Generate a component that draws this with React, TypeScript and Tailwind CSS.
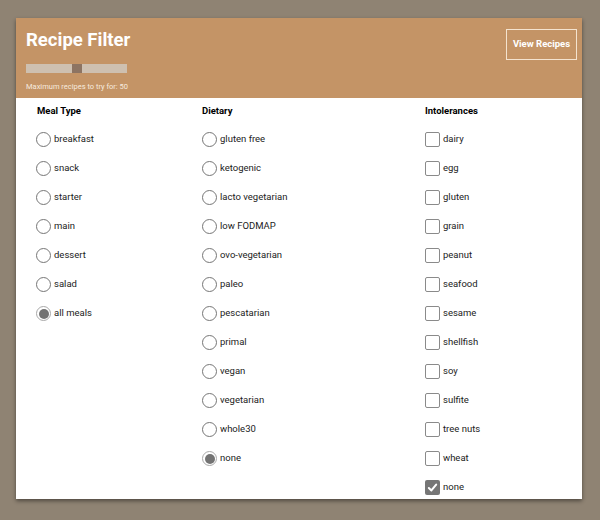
import React from "react";

const mealTypes = ["breakfast", "snack", "starter", "main", "dessert", "salad", "all meals"];
const diets = [
  "gluten free",
  "ketogenic",
  "lacto vegetarian",
  "low FODMAP",
  "ovo-vegetarian",
  "paleo",
  "pescatarian",
  "primal",
  "vegan",
  "vegetarian",
  "whole30",
  "none",
];
const intolerances = [
  "dairy",
  "egg",
  "gluten",
  "grain",
  "peanut",
  "seafood",
  "sesame",
  "shellfish",
  "soy",
  "sulfite",
  "tree nuts",
  "wheat",
  "none",
];

function Radio({ label, checked }: { label: string; checked?: boolean }) {
  return (
    <div className="flex items-center h-[29px]">
      <span
        className={`w-[15px] h-[15px] rounded-full border flex items-center justify-center bg-white ${
          checked ? "border-[#a9a9a9]" : "border-[#767676]"
        }`}
      >
        {checked && <span className="w-[10px] h-[10px] rounded-full bg-[#737373]"></span>}
      </span>
      <span className="ml-[3px] text-[9.5px] text-[#222]">{label}</span>
    </div>
  );
}

function Checkbox({ label, checked }: { label: string; checked?: boolean }) {
  return (
    <div className="flex items-center h-[29px]">
      {checked ? (
        <span className="w-[15px] h-[15px] rounded-[2px] bg-[#767676] flex items-center justify-center">
          <svg width="11" height="11" viewBox="0 0 12 12">
            <path d="M2 6.5 L4.8 9.2 L10 2.8" fill="none" stroke="white" strokeWidth="2.2" strokeLinecap="round" strokeLinejoin="round" />
          </svg>
        </span>
      ) : (
        <span className="w-[15px] h-[15px] rounded-[2px] border border-[#8a8a8a] bg-white"></span>
      )}
      <span className="ml-[3px] text-[9.5px] text-[#222]">{label}</span>
    </div>
  );
}

export default function App() {
  return (
    <div
      className="w-[600px] h-[520px] bg-[#8f8373] pt-[18px] pl-[16px]"
      style={{ fontFamily: "Roboto, 'Liberation Sans', sans-serif" }}
    >
      <div className="w-[566px] h-[481px] bg-white shadow-[0_2px_4px_rgba(0,0,0,0.45)] flex flex-col">
        <div className="h-[80px] shrink-0 bg-[#c49466] flex justify-between pl-[10px] pr-[5px]">
          <div className="flex flex-col">
            <h1 className="text-[18.5px] font-bold text-white leading-none mt-[13px]">Recipe Filter</h1>
            <div className="relative w-[101px] h-[9px] bg-[#cec0b0] mt-[14px]">
              <div className="absolute left-[46px] top-0 w-[10px] h-[9px] bg-[#8d7462]"></div>
            </div>
            <p className="text-[7.5px] text-[#f6eadf] mt-[8px]">Maximum recipes to try for: 50</p>
          </div>
          <button className="mt-[11px] w-[71px] h-[31px] border border-[#f4e3cf] text-white text-[9.5px] font-bold">
            View Recipes
          </button>
        </div>
        <div className="grid grid-cols-[166px_223px_1fr] pl-[20px] pt-[4px]">
          <div>
            <h2 className="text-[9.5px] font-bold text-black h-[18px] flex items-center pl-[1px]">Meal Type</h2>
            <div className="mt-[5px]">
              {mealTypes.map((m) => (
                <Radio key={m} label={m} checked={m === "all meals"} />
              ))}
            </div>
          </div>
          <div>
            <h2 className="text-[9.5px] font-bold text-black h-[18px] flex items-center">Dietary</h2>
            <div className="mt-[5px]">
              {diets.map((d) => (
                <Radio key={d} label={d} checked={d === "none"} />
              ))}
            </div>
          </div>
          <div>
            <h2 className="text-[9.5px] font-bold text-black h-[18px] flex items-center">Intolerances</h2>
            <div className="mt-[5px]">
              {intolerances.map((i) => (
                <Checkbox key={i} label={i} checked={i === "none"} />
              ))}
            </div>
          </div>
        </div>
      </div>
    </div>
  );
}
